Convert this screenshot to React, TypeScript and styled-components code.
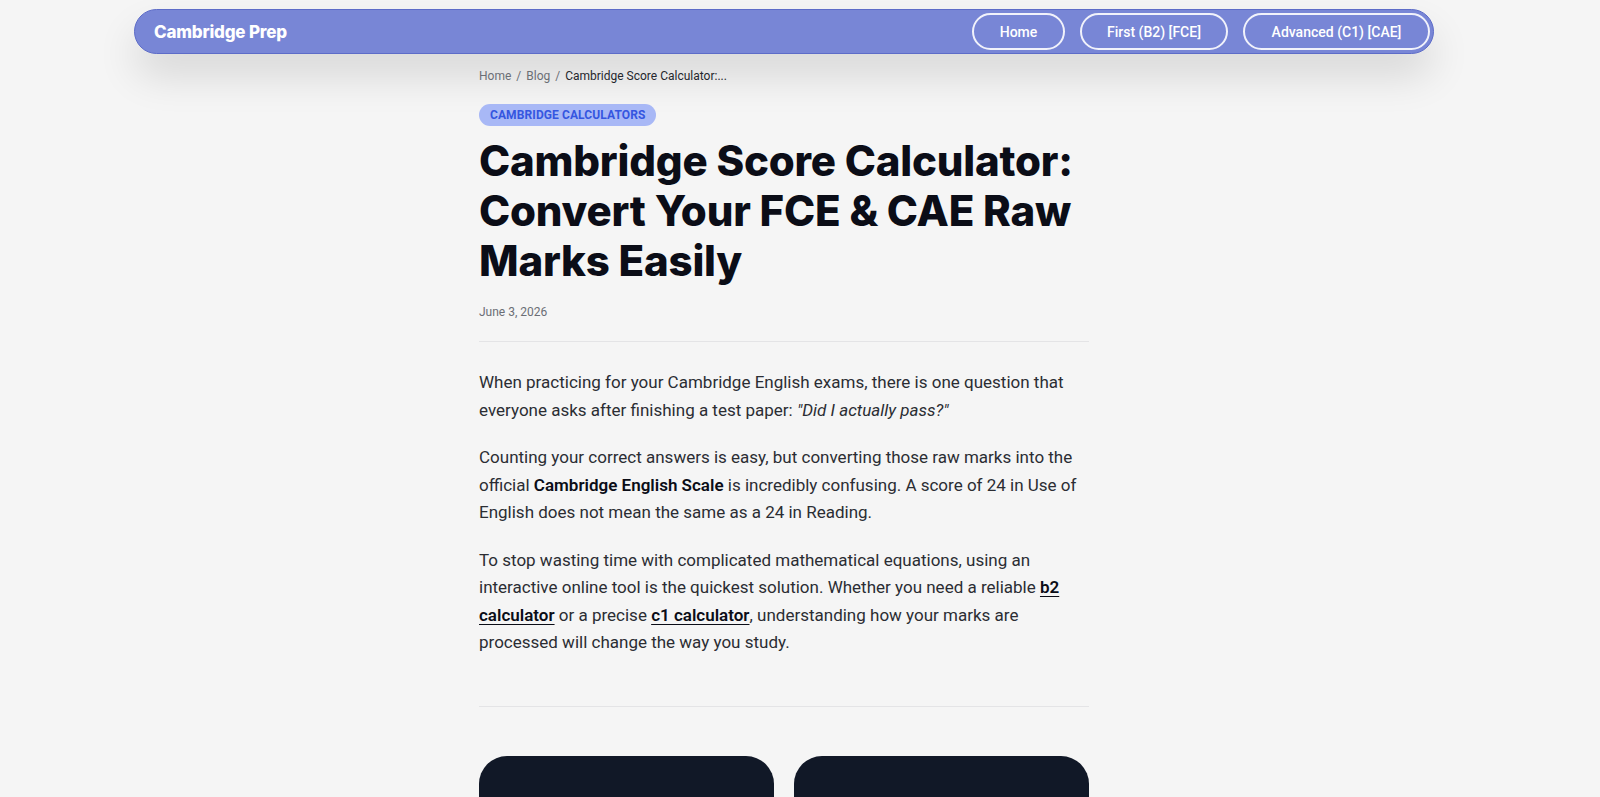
import styled, { createGlobalStyle } from "styled-components";

const GlobalStyle = createGlobalStyle`
  html, body {
    margin: 0;
    padding: 0;
    background: #f5f5f5;
    font-family: Roboto, "Liberation Sans", sans-serif;
    color: #2b2d33;
  }
`;

const Page = styled.div`
  width: 1568px;
  padding-top: 9px;
  overflow: hidden;
`;

// Barra superior
const Header = styled.header`
  width: 1300px;
  height: 45px;
  margin: 0 auto;
  box-sizing: border-box;
  display: flex;
  align-items: center;
  justify-content: space-between;
  padding: 0 3px 0 19px;
  background: #7886d6;
  border: 1px solid #5d6cc8;
  border-radius: 999px;
  box-shadow: 0 22px 40px rgba(0, 0, 0, 0.12);
`;

const Logo = styled.a`
  font-family: Inter, sans-serif;
  font-size: 17px;
  font-weight: 800;
  letter-spacing: -0.2px;
  color: #fff;
  text-decoration: none;
`;

const Nav = styled.nav`
  display: flex;
  gap: 15px;
`;

const NavButton = styled.a<{ $w: number }>`
  width: ${(p) => p.$w}px;
  height: 37px;
  box-sizing: border-box;
  display: flex;
  align-items: center;
  justify-content: center;
  border: 2px solid #f1f2fb;
  border-radius: 999px;
  color: #fff;
  font-size: 14px;
  font-weight: 500;
  text-decoration: none;
`;

const Article = styled.article`
  width: 610px;
  margin: 0 auto;
`;

const Breadcrumb = styled.div`
  display: flex;
  gap: 5px;
  margin-top: 15px;
  font-size: 12px;
  color: #6b6e75;

  strong {
    font-weight: 400;
    color: #25272d;
  }
`;

const Tag = styled.span`
  display: inline-block;
  margin-top: 21px;
  padding: 4px 11px;
  border-radius: 999px;
  background: #a8b8f6;
  color: #3556e0;
  font-size: 12px;
  font-weight: 700;
  letter-spacing: 0.1px;
`;

const Title = styled.h1`
  margin: 10px 0 0;
  font-family: Inter, sans-serif;
  font-size: 42px;
  font-weight: 800;
  line-height: 50px;
  letter-spacing: -0.2px;
  color: #0b0d17;
`;

const DateLine = styled.div`
  margin-top: 19px;
  font-size: 12px;
  color: #6b6e75;
`;

const Divider = styled.hr<{ $gap: number }>`
  border: none;
  border-top: 1px solid #e4e4e6;
  margin: ${(p) => p.$gap}px 0 0;
`;

const Body = styled.div`
  margin-top: 27px;

  p {
    margin: 0 0 20px;
    font-size: 17px;
    line-height: 27.5px;
    color: #2b2d33;
  }

  strong {
    font-weight: 600;
    color: #0b0d17;
  }

  a {
    font-weight: 600;
    color: #0b0d17;
    text-decoration: underline;
    text-underline-offset: 3px;
  }
`;

const Cards = styled.div`
  display: grid;
  grid-template-columns: 1fr 1fr;
  gap: 20px;
  margin-top: 49px;
`;

const Card = styled.div`
  height: 120px;
  background: #111827;
  border-radius: 28px;
`;

export default function App() {
  return (
    <>
      <GlobalStyle />
      <Page>
        <Header>
          <Logo href="#">Cambridge Prep</Logo>
          <Nav>
            <NavButton href="#" $w={93}>Home</NavButton>
            <NavButton href="#" $w={148}>First (B2) [FCE]</NavButton>
            <NavButton href="#" $w={187}>Advanced (C1) [CAE]</NavButton>
          </Nav>
        </Header>
        <Article>
          <Breadcrumb>
            <span>Home</span>
            <span>/</span>
            <span>Blog</span>
            <span>/</span>
            <strong>Cambridge Score Calculator:...</strong>
          </Breadcrumb>
          <Tag>CAMBRIDGE CALCULATORS</Tag>
          <Title>Cambridge Score Calculator: Convert Your FCE &amp; CAE Raw Marks Easily</Title>
          <DateLine>June 3, 2026</DateLine>
          <Divider $gap={22} />
          <Body>
            <p>
              When practicing for your Cambridge English exams, there is one question that
              everyone asks after finishing a test paper: <em>"Did I actually pass?"</em>
            </p>
            <p>
              Counting your correct answers is easy, but converting those raw marks into the
              official <strong>Cambridge English Scale</strong> is incredibly confusing. A score
              of 24 in Use of English does not mean the same as a 24 in Reading.
            </p>
            <p>
              To stop wasting time with complicated mathematical equations, using an interactive
              online tool is the quickest solution. Whether you need a reliable{" "}
              <a href="#">b2 calculator</a> or a precise <a href="#">c1 calculator</a>,
              understanding how your marks are processed will change the way you study.
            </p>
          </Body>
          <Divider $gap={49} />
          <Cards>
            <Card />
            <Card />
          </Cards>
        </Article>
      </Page>
    </>
  );
}
